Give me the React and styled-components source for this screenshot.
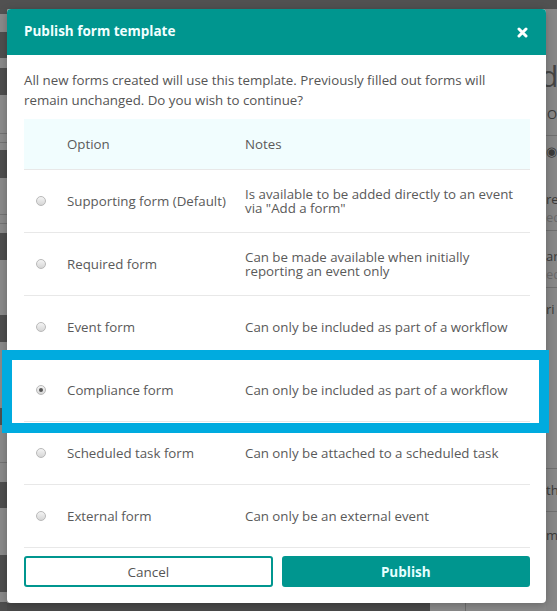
import styled, { createGlobalStyle } from 'styled-components';

const GlobalStyle = createGlobalStyle`
  html, body {
    margin: 0;
    padding: 0;
  }
  body {
    font-family: "Open Sans", "Liberation Sans", Arial, sans-serif;
    font-size: 13.3px;
    color: #555;
  }
  *, *::before, *::after {
    box-sizing: border-box;
  }
`;

const TEAL = '#00968f';

const Screen = styled.div`
  position: relative;
  width: 557px;
  height: 611px;
  overflow: hidden;
  background: #878787;
`;

const PageBehind = styled.div`
  display: flex;
  flex-direction: column;
  height: 100%;
`;

const TopBar = styled.div`
  height: 9px;
  flex: none;
  background: #515151;
`;

const PageBody = styled.div`
  flex: 1;
  display: flex;
`;

const LeftEdge = styled.div`
  width: 7px;
  flex: none;
  background: linear-gradient(
    to bottom,
    #525252 0 5px,
    #8a8a8a 5px 23px,
    #4e4e4e 23px 49px,
    #8a8a8a 49px 59px,
    #4e4e4e 59px 86px,
    #8c8c8c 86px 124px,
    #737373 124px 125px,
    #8c8c8c 125px 133px,
    #737373 133px 134px,
    #8c8c8c 134px 141px,
    #4e4e4e 141px 169px,
    #8a8a8a 169px 205px,
    #737373 205px 206px,
    #8a8a8a 206px 214px,
    #737373 214px 215px,
    #8a8a8a 215px 224px,
    #4e4e4e 224px 251px,
    #8a8a8a 251px 306px,
    #4e4e4e 306px 333px,
    #8a8a8a 333px 399px,
    #4e4e4e 399px 416px,
    #8a8a8a 416px 453px,
    #737373 453px 454px,
    #8a8a8a 454px 473px,
    #4e4e4e 473px 499px,
    #8a8a8a 499px 546px,
    #4e4e4e 546px 583px,
    #8a8a8a 583px 593px,
    #4e4e4e 593px
  );
`;

const Middle = styled.div`
  flex: 1;
  display: flex;
  flex-direction: column;
  justify-content: flex-end;
`;

const BottomStrip = styled.div`
  height: 8px;
  background: linear-gradient(
    to right,
    #4a4a4a 0 423px,
    #8a8a8a 423px 458px,
    #6e6e6e 458px 459px,
    #8a8a8a 459px
  );
`;

const RightPeek = styled.div`
  width: 11px;
  flex: none;
  overflow: hidden;
  display: flex;
  flex-direction: column;
  padding-top: 50px;
  font-size: 13px;
  color: #3a3a3a;
  white-space: nowrap;
`;

const PeekTitle = styled.div`
  font-size: 30px;
  line-height: 34px;
  margin-left: -6px;
  color: #444;
`;

const PeekText = styled.div`
  line-height: 18px;
  padding: ${p => p.$pad || '0'};
  border-bottom: ${p => (p.$line ? '1px solid #6f6f6f' : 'none')};
  color: ${p => (p.$faint ? '#6a6a6a' : '#3a3a3a')};
`;

const Dialog = styled.div`
  position: absolute;
  top: 9px;
  left: 7px;
  width: 539px;
  background: #fff;
  border-radius: 4px;
  box-shadow: 0 2px 8px rgba(0, 0, 0, 0.25);
`;

const Header = styled.div`
  height: 46px;
  display: flex;
  align-items: center;
  justify-content: space-between;
  padding: 0 17px 2px 17px;
  background: ${TEAL};
  border-radius: 4px 4px 0 0;
  color: #fff;
`;

const Title = styled.h2`
  margin: 0;
  font-size: 13.5px;
  font-weight: 700;
  color: #f2ffff;
`;

const CloseButton = styled.button`
  display: flex;
  align-items: center;
  justify-content: center;
  width: 16px;
  height: 16px;
  padding: 0;
  margin-right: -1px;
  margin-top: 2px;
  border: none;
  background: none;
  cursor: pointer;
`;

const Body = styled.div`
  padding: 15px 16px 16px 17px;
`;

const Intro = styled.p`
  margin: 0 0 9px;
  line-height: 20px;
  color: #555;
`;

const Table = styled.div`
  display: flex;
  flex-direction: column;
`;

const Row = styled.div`
  position: relative;
  display: grid;
  grid-template-columns: 33px 178px 1fr;
  align-items: center;
  height: ${p => (p.$head ? '50px' : '63px')};
  border-top: ${p => (p.$head ? 'none' : '1px solid #e8e8e8')};
  background: ${p => (p.$head ? '#f1fdfe' : '#fff')};
  color: #5a5a5a;
`;

const Cell = styled.div`
  padding: 0 10px;
  line-height: 14px;
`;

const OptionCell = styled(Cell)`
  padding: 0 0 0 10px;
  white-space: nowrap;
`;

const RadioCell = styled.div`
  display: flex;
  align-items: center;
  padding-left: 12px;
`;

const Radio = styled.span`
  position: relative;
  width: 10px;
  height: 10px;
  border-radius: 50%;
  border: 1px solid #b9b9b9;
  background: linear-gradient(to bottom, #f4f4f4, #d6d6d6);

  &::after {
    content: '';
    display: ${p => (p.$checked ? 'block' : 'none')};
    position: absolute;
    left: 2px;
    top: 2px;
    width: 4px;
    height: 4px;
    border-radius: 50%;
    background: #555;
  }
`;

const Highlight = styled.div`
  position: absolute;
  z-index: 2;
  left: -22px;
  right: -19px;
  top: -9px;
  bottom: -12px;
  border: 10px solid #00abdf;
  pointer-events: none;
`;

const Footer = styled.div`
  display: grid;
  grid-template-columns: 1fr 1fr;
  gap: 9px;
  padding-top: 8px;
  border-top: 1px solid #e8e8e8;
`;

const Button = styled.button`
  height: 31px;
  border-radius: 3px;
  font-family: inherit;
  font-size: 13.5px;
  cursor: pointer;
  border: 2px solid ${TEAL};
  background: ${p => (p.$primary ? TEAL : '#fff')};
  color: ${p => (p.$primary ? '#e6ffff' : '#555')};
  font-weight: ${p => (p.$primary ? 700 : 400)};
`;

const options = [
  { label: 'Supporting form (Default)', notes: 'Is available to be added directly to an event via "Add a form"' },
  { label: 'Required form', notes: 'Can be made available when initially reporting an event only' },
  { label: 'Event form', notes: 'Can only be included as part of a workflow' },
  { label: 'Compliance form', notes: 'Can only be included as part of a workflow', checked: true },
  { label: 'Scheduled task form', notes: 'Can only be attached to a scheduled task' },
  { label: 'External form', notes: 'Can only be an external event' },
];

const CloseIcon = () => (
  <svg width="11" height="11" viewBox="0 0 11 11">
    <path d="M2 2 L9 9 M9 2 L2 9" stroke="#fff" strokeWidth="3" strokeLinecap="round" />
  </svg>
);

export default function App() {
  return (
    <>
      <GlobalStyle />
      <Screen>
        <PageBehind>
          <TopBar />
          <PageBody>
            <LeftEdge />
            <Middle>
              <BottomStrip />
            </Middle>
            <RightPeek>
              <PeekTitle>d</PeekTitle>
              <PeekText $pad="12px 0 12px 1px" $line>Options</PeekText>
              <PeekText $pad="6px 0 30px">◉</PeekText>
              <PeekText>re</PeekText>
              <PeekText $faint $line $pad="0 0 4px">ed</PeekText>
              <PeekText $pad="16px 0 0">art</PeekText>
              <PeekText $faint $line $pad="0 0 4px">ed</PeekText>
              <PeekText $pad="12px 0 110px">ri</PeekText>
              <PeekText $line $pad="0 0 40px" />
              <PeekText $pad="12px 0 0">th</PeekText>
              <PeekText $line $pad="0 0 12px" />
              <PeekText $pad="14px 0 0">me</PeekText>
            </RightPeek>
          </PageBody>
        </PageBehind>

        <Dialog>
          <Header>
            <Title>Publish form template</Title>
            <CloseButton aria-label="Close">
              <CloseIcon />
            </CloseButton>
          </Header>
          <Body>
            <Intro>
              All new forms created will use this template. Previously filled out forms will
              remain unchanged. Do you wish to continue?
            </Intro>
            <Table>
              <Row $head>
                <RadioCell />
                <OptionCell>Option</OptionCell>
                <Cell>Notes</Cell>
              </Row>
              {options.map(opt => (
                <Row key={opt.label}>
                  <RadioCell>
                    <Radio $checked={opt.checked} />
                  </RadioCell>
                  <OptionCell>{opt.label}</OptionCell>
                  <Cell>{opt.notes}</Cell>
                  {opt.checked && <Highlight />}
                </Row>
              ))}
            </Table>
            <Footer>
              <Button>Cancel</Button>
              <Button $primary>Publish</Button>
            </Footer>
          </Body>
        </Dialog>
      </Screen>
    </>
  );
}
